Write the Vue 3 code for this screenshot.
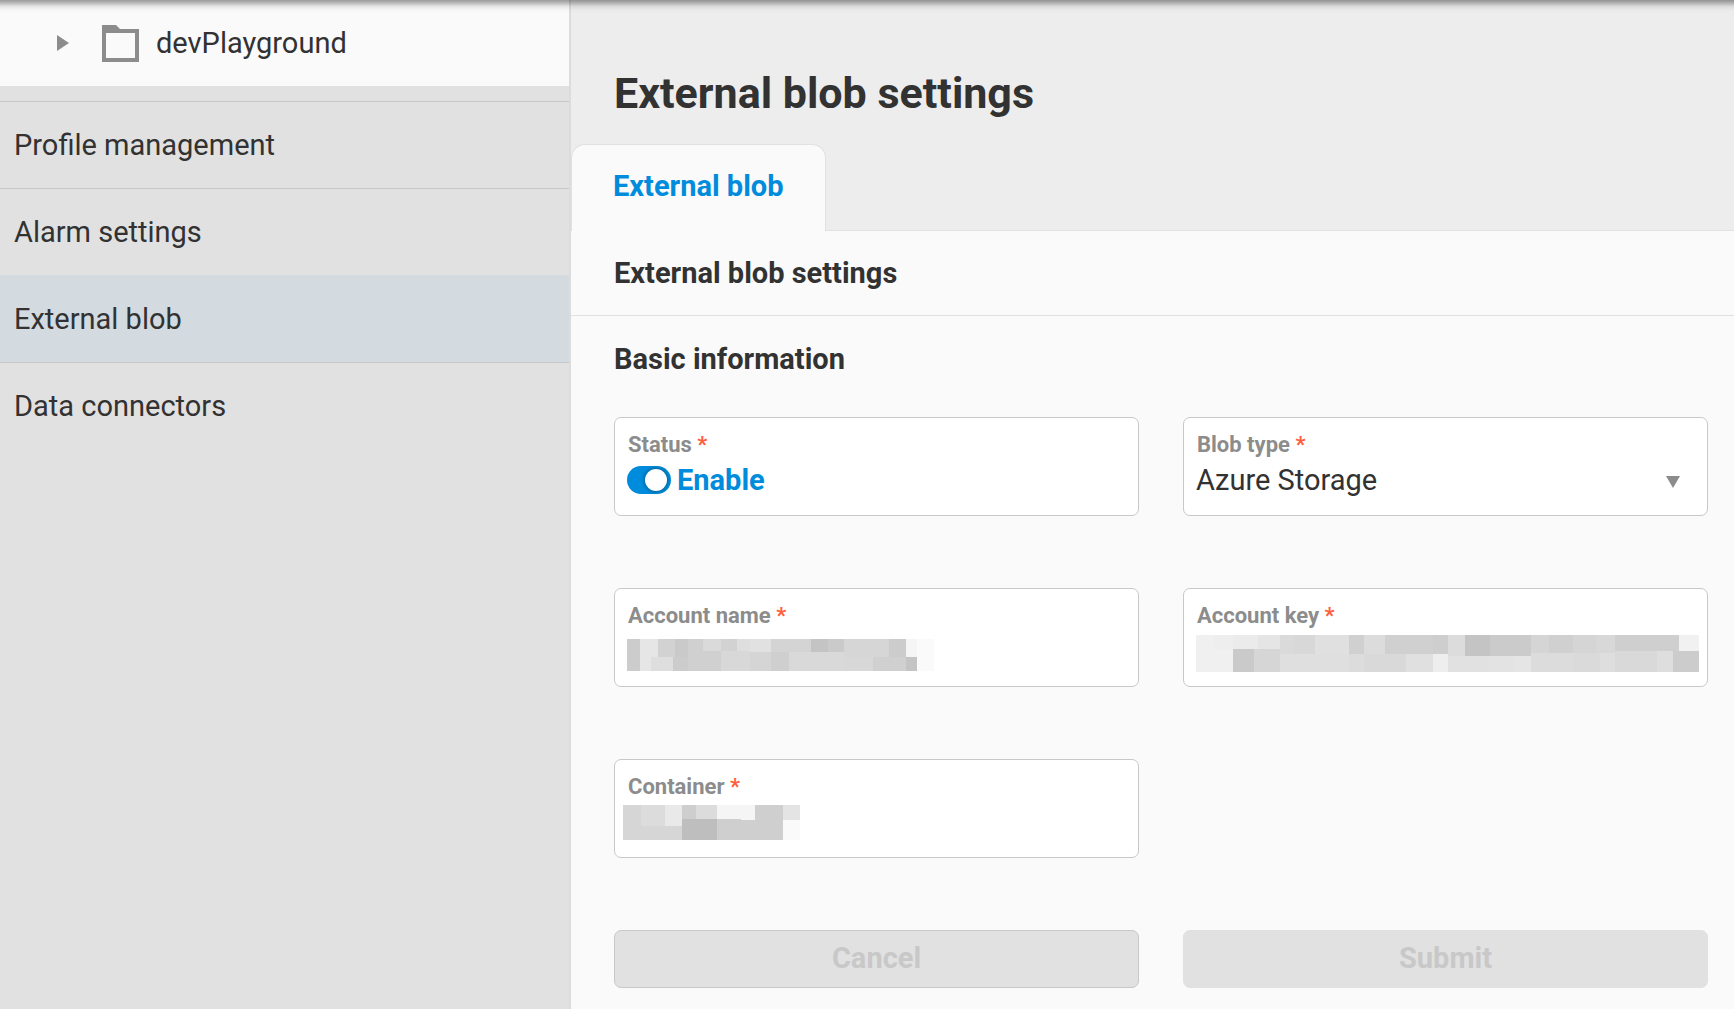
<template>
  <div class="page">
    <aside class="sidebar">
      <button class="tree-node" type="button">
        <svg class="tree-arrow" width="12" height="16" viewBox="0 0 12 16">
          <path d="M0 0L12 8L0 16Z" fill="#8c8c8c" />
        </svg>
        <svg class="tree-folder" width="37" height="37" viewBox="0 0 37 37">
          <path
            d="M0 0H14L18 4H37V37H0ZM4 8V33H33V8Z"
            fill="#8c8c8c"
            fill-rule="evenodd"
          />
        </svg>
        <span>devPlayground</span>
      </button>
      <nav class="menu">
        <a
          v-for="item in menu"
          :key="item"
          href="#"
          class="menu-item"
          :class="{ active: item === current }"
          @click.prevent="current = item"
          >{{ item }}</a
        >
      </nav>
    </aside>

    <main class="main">
      <h1 class="title">External blob settings</h1>
      <div class="tabs">
        <button class="tab" type="button">External blob</button>
      </div>
      <section class="content">
        <h2 class="heading section-title">External blob settings</h2>
        <form class="form" @submit.prevent>
          <h3 class="heading">Basic information</h3>
          <div class="grid">
            <div class="field">
              <label class="label" for="status">Status <i>*</i></label>
              <div class="value">
                <input
                  id="status"
                  v-model="enabled"
                  class="switch"
                  type="checkbox"
                />
                <label class="switch-text" for="status">{{
                  enabled ? "Enable" : "Disable"
                }}</label>
              </div>
            </div>

            <div class="field">
              <label class="label" for="type">Blob type <i>*</i></label>
              <div class="value">
                <select id="type" v-model="blobType" class="control">
                  <option>Azure Storage</option>
                </select>
                <svg class="caret" width="14" height="12" viewBox="0 0 14 12">
                  <path d="M0 0H14L7 12Z" fill="#8c8c8c" />
                </svg>
              </div>
            </div>

            <div v-for="field in maskedFields" :key="field.id" class="field">
              <label class="label" :for="field.id"
                >{{ field.label }} <i>*</i></label
              >
              <div class="value">
                <input :id="field.id" class="control" type="text" readonly />
                <svg class="mask" shape-rendering="crispEdges">
                  <g :transform="`translate(${field.x} ${field.y})`">
                    <rect
                      v-for="([x1, x2, y1, y2, tone], i) in field.blocks"
                      :key="i"
                      :x="x1"
                      :y="y1"
                      :width="x2 - x1"
                      :height="y2 - y1"
                      :fill="`rgb(${tone},${tone},${tone})`"
                    />
                  </g>
                </svg>
              </div>
            </div>
          </div>

          <div class="actions">
            <button class="btn outlined" type="button" disabled>Cancel</button>
            <button class="btn" type="submit" disabled>Submit</button>
          </div>
        </form>
      </section>
    </main>
  </div>
</template>

<script setup>
import { ref } from "vue";

const menu = [
  "Profile management",
  "Alarm settings",
  "External blob",
  "Data connectors",
];
const current = ref("External blob");
const enabled = ref(true);
const blobType = ref("Azure Storage");

// blocks: [x1, x2, y1, y2, grey tone]
const maskedFields = [
  {
    id: "account-name",
    label: "Account name",
    x: 0,
    y: 10,
    blocks: [
      [0, 13, 0, 32, 204],
      [13, 24, 0, 32, 230],
      [24, 31, 0, 18, 230],
      [31, 48, 0, 18, 210],
      [48, 61, 0, 18, 202],
      [24, 46, 18, 32, 222],
      [46, 61, 18, 32, 204],
      [61, 76, 0, 32, 208],
      [76, 94, 0, 12, 218],
      [76, 94, 12, 32, 208],
      [94, 110, 0, 12, 210],
      [110, 123, 0, 12, 222],
      [94, 123, 12, 32, 216],
      [123, 144, 0, 13, 225],
      [123, 144, 13, 32, 213],
      [144, 184, 0, 13, 212],
      [144, 162, 13, 32, 207],
      [162, 217, 13, 32, 217],
      [184, 201, 0, 13, 196],
      [201, 217, 0, 13, 202],
      [217, 246, 13, 32, 216],
      [217, 262, 0, 18, 214],
      [262, 279, 0, 18, 204],
      [246, 279, 18, 32, 208],
      [279, 290, 0, 18, 245],
      [279, 290, 18, 32, 196],
      [290, 307, 0, 32, 250],
    ],
  },
  {
    id: "account-key",
    label: "Account key",
    x: 0,
    y: 6,
    blocks: [
      [0, 37, 0, 37, 240],
      [18, 37, 0, 14, 238],
      [37, 62, 0, 14, 235],
      [62, 84, 0, 14, 229],
      [84, 98, 0, 19, 218],
      [98, 119, 0, 19, 216],
      [119, 153, 0, 19, 224],
      [153, 168, 0, 19, 208],
      [168, 189, 0, 19, 220],
      [189, 237, 0, 19, 208],
      [237, 252, 0, 19, 206],
      [252, 269, 0, 21, 220],
      [269, 294, 0, 21, 196],
      [294, 335, 0, 21, 203],
      [335, 353, 0, 18, 213],
      [353, 377, 0, 18, 208],
      [377, 400, 0, 18, 213],
      [400, 419, 0, 18, 216],
      [419, 483, 0, 16, 207],
      [483, 503, 0, 16, 241],
      [37, 58, 14, 37, 202],
      [58, 84, 14, 37, 214],
      [84, 153, 19, 37, 223],
      [153, 168, 19, 37, 220],
      [168, 210, 19, 37, 217],
      [210, 237, 19, 37, 224],
      [237, 252, 19, 37, 238],
      [252, 294, 21, 37, 225],
      [294, 317, 21, 37, 227],
      [317, 335, 21, 37, 229],
      [335, 377, 18, 37, 220],
      [377, 404, 18, 37, 218],
      [404, 419, 18, 37, 222],
      [419, 461, 16, 37, 217],
      [461, 477, 16, 37, 222],
      [477, 503, 16, 37, 204],
    ],
  },
  {
    id: "container",
    label: "Container",
    x: -4,
    y: 5,
    blocks: [
      [0, 59, 0, 35, 214],
      [18, 42, 0, 21, 220],
      [42, 59, 0, 21, 233],
      [59, 73, 0, 14, 206],
      [73, 94, 0, 14, 220],
      [59, 94, 14, 35, 190],
      [94, 160, 0, 35, 207],
      [94, 118, 0, 14, 245],
      [118, 132, 0, 15, 245],
      [160, 177, 0, 15, 228],
      [160, 177, 15, 35, 250],
    ],
  },
];
</script>

<style>
body {
  margin: 0;
  background: #fafafa;
}
</style>

<style scoped>
.page {
  position: relative;
  display: flex;
  min-height: 100vh;
  font-family: Roboto, "Liberation Sans", sans-serif;
  font-size: 29px;
  color: #323232;
}
/* shadow of the app bar above */
.page::before {
  content: "";
  position: absolute;
  top: 0;
  left: 0;
  right: 0;
  height: 13px;
  background: linear-gradient(
    rgba(0, 0, 0, 0.38),
    rgba(0, 0, 0, 0.24) 25%,
    rgba(0, 0, 0, 0.08) 50%,
    rgba(0, 0, 0, 0.02) 75%,
    transparent
  );
}
button,
input,
select {
  font: inherit;
  color: inherit;
}
.sidebar {
  flex: none;
  box-sizing: border-box;
  width: 571px;
  border-right: 2px solid #dcdcdc;
  background: #e1e1e1;
}
.tree-node {
  display: flex;
  align-items: center;
  width: 100%;
  height: 86px;
  padding: 0 57px;
  border: 0;
  background: #fafafa;
}
.tree-folder {
  margin: 0 17px 0 33px;
}
.menu {
  margin-top: 15px;
}
.menu-item {
  display: block;
  padding: 0 14px;
  border-top: 1px solid #c8c8c8;
  line-height: 86px;
  color: inherit;
  text-decoration: none;
}
.menu-item.active {
  border-color: #d3dae0;
  background: #d3dae0;
}
.main {
  flex: 1;
  display: flex;
  flex-direction: column;
  min-width: 0;
  background: #ededed;
}
.title {
  margin: 68px 43px 26px;
  font-size: 43px;
  line-height: 50px;
  font-weight: 700;
}
.tabs {
  display: flex;
  margin-bottom: -1px;
}
.tab {
  position: relative;
  height: 87px;
  padding: 0 41px 4px;
  border: 1px solid #e1e1e1;
  border-bottom: 0;
  border-radius: 14px 14px 0 0;
  background: #fafafa;
  font-weight: 700;
  color: #008cdc;
}
.content {
  flex: 1;
  border-top: 1px solid #e1e1e1;
  background: #fafafa;
}
.heading {
  margin: 0;
  font-size: 29px;
  line-height: 86px;
  font-weight: 700;
}
.section-title {
  padding-left: 43px;
  border-bottom: 1px solid #e1e1e1;
  line-height: 84px;
}
.form {
  padding: 0 26px 20px 43px;
}
.grid,
.actions {
  display: grid;
  grid-template-columns: 1fr 1fr;
  gap: 72px 44px;
}
.grid {
  margin-top: 15px;
}
.actions {
  margin-top: 72px;
}
.field {
  box-sizing: border-box;
  min-width: 0;
  height: 99px;
  padding: 14px 12px;
  border: 1px solid #c8c8c8;
  border-radius: 7px;
  background: #fff;
}
.label {
  display: block;
  padding-left: 1px;
  font-size: 22px;
  line-height: 26px;
  font-weight: 700;
  color: #8c8c8c;
}
.label i {
  font-style: normal;
  color: #ff5f3c;
}
.value {
  position: relative;
  display: flex;
  align-items: center;
  height: 44px;
}
.switch {
  appearance: none;
  display: flex;
  align-items: center;
  box-sizing: border-box;
  width: 44px;
  height: 28px;
  margin: 0 6px 0 0;
  padding: 0 4px;
  border-radius: 14px;
  background: #8c8c8c;
}
.switch:checked {
  justify-content: flex-end;
  background: #008cdc;
}
.switch::before {
  content: "";
  width: 22px;
  height: 22px;
  border-radius: 50%;
  background: #fff;
  box-shadow: 0 0 4px rgba(0, 0, 0, 0.5);
}
.switch-text {
  font-weight: 700;
  color: #008cdc;
}
.control {
  appearance: none;
  width: 100%;
  height: 44px;
  padding: 0;
  border: 0;
  outline: 0;
  background: transparent;
}
.caret {
  position: absolute;
  top: 18px;
  right: 15px;
  pointer-events: none;
}
.mask {
  position: absolute;
  top: 0;
  left: 0;
  width: 100%;
  height: 44px;
  overflow: visible;
  pointer-events: none;
}
.btn {
  height: 58px;
  padding: 0 0 2px;
  border: 1px solid #e1e1e1;
  border-radius: 7px;
  background: #e1e1e1;
  font-weight: 700;
  color: #c8c8c8;
}
.btn.outlined {
  border-color: #c8c8c8;
}
</style>
